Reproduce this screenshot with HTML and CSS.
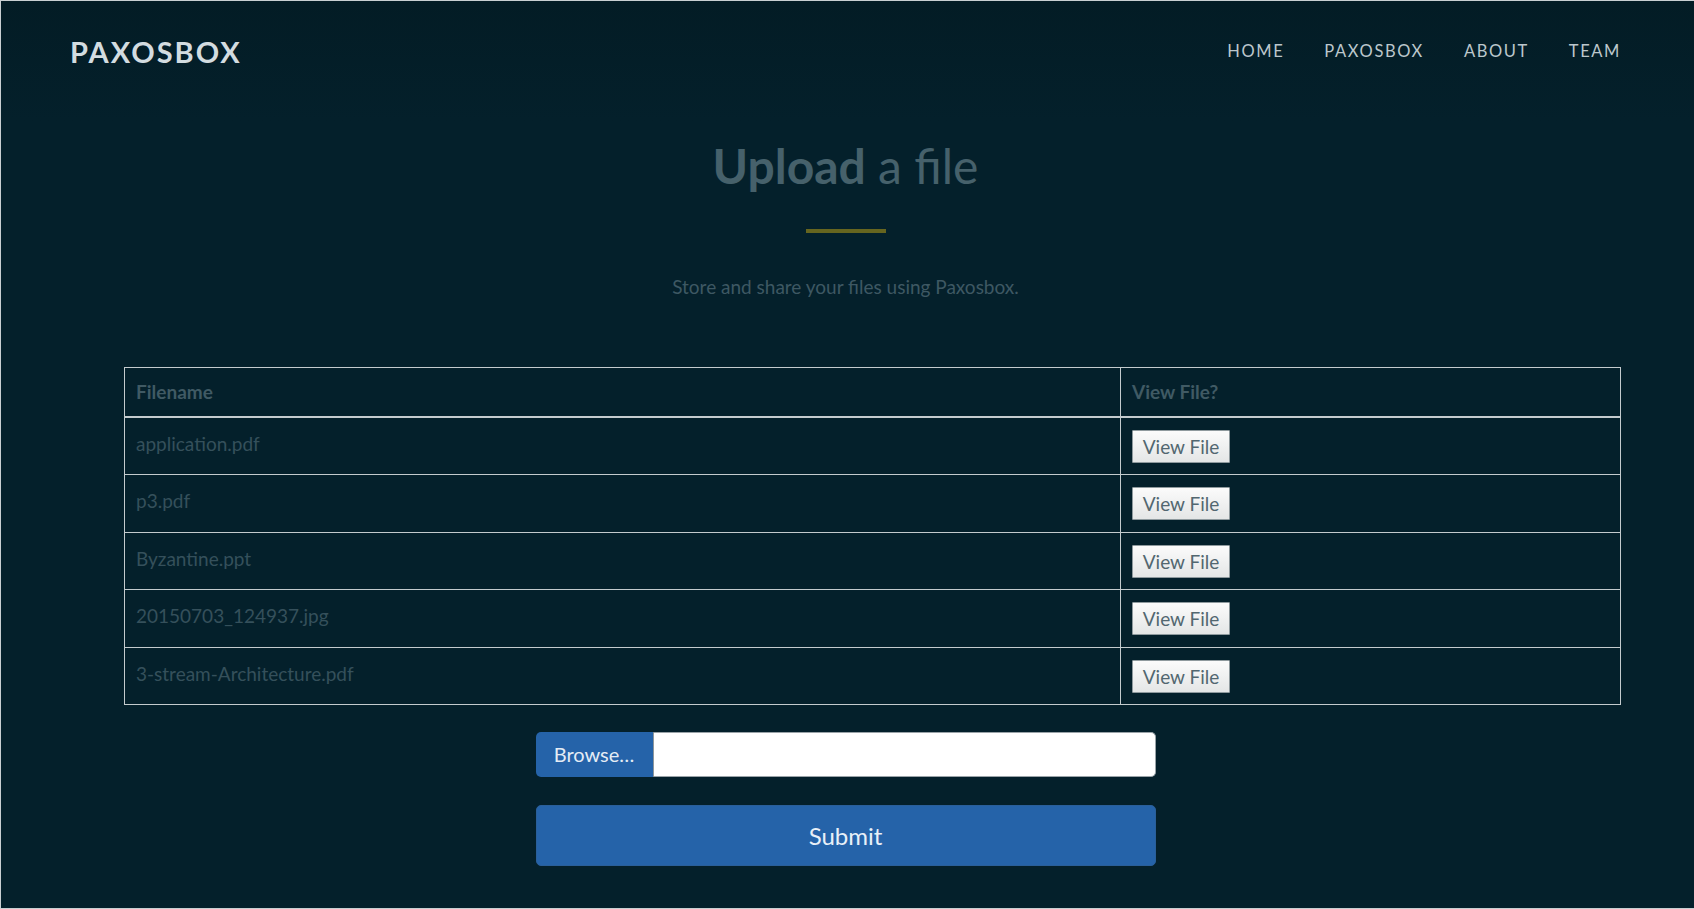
FILE: index.html
```html
<!DOCTYPE html>
<html lang="en">
<head>
<meta charset="utf-8">
<title>Paxosbox - Upload a file</title>
<link rel="stylesheet" href="styles.css">
</head>
<body>
<div class="page">
  <header class="topbar">
    <a class="brand" href="#">PAXOSBOX</a>
    <nav>
      <ul class="menu">
        <li><a href="#">HOME</a></li>
        <li><a href="#">PAXOSBOX</a></li>
        <li><a href="#">ABOUT</a></li>
        <li><a href="#">TEAM</a></li>
      </ul>
    </nav>
  </header>

  <section class="intro">
    <h1 class="title"><strong>Upload</strong> a file</h1>
    <hr class="rule">
    <p class="lead">Store and share your files using Paxosbox.</p>
  </section>

  <table class="files">
    <thead>
      <tr><th class="col-name">Filename</th><th>View File?</th></tr>
    </thead>
    <tbody>
      <tr><td>application.pdf</td><td><button class="view">View File</button></td></tr>
      <tr><td>p3.pdf</td><td><button class="view">View File</button></td></tr>
      <tr><td>Byzantine.ppt</td><td><button class="view">View File</button></td></tr>
      <tr><td>20150703_124937.jpg</td><td><button class="view">View File</button></td></tr>
      <tr><td>3-stream-Architecture.pdf</td><td><button class="view">View File</button></td></tr>
    </tbody>
  </table>

  <form class="upload">
    <div class="file-group">
      <span class="browse">Browse…</span>
      <span class="file-field"></span>
    </div>
    <button type="button" class="submit">Submit</button>
  </form>
</div>
</body>
</html>
```
FILE: styles.css
```css
html, body {
  margin: 0;
  padding: 0;
  background: #04202b;
}

body {
  font-family: Lato, "Open Sans", "Liberation Sans", sans-serif;
}

.page {
  box-sizing: border-box;
  height: 909px;
  background: linear-gradient(#031c25 0, #04202b 120px);
  border-top: 1px solid #c9cfd2;
  border-left: 1px solid #c9cfd2;
  border-bottom: 1px solid #c9cfd2;
  overflow: hidden;
}

/* ---------- top bar ---------- */
.topbar {
  display: flex;
  justify-content: space-between;
  align-items: flex-start;
  padding: 31px 73px 0 69px;
  height: 40px;
}

.brand {
  font-size: 29px;
  line-height: 40px;
  font-weight: 700;
  letter-spacing: 2px;
  color: #d3dce0;
  text-decoration: none;
}

.menu {
  display: flex;
  gap: 40px;
  list-style: none;
  margin: 0;
  padding: 0;
}

.menu a {
  display: block;
  font-size: 16.5px;
  line-height: 39px;
  letter-spacing: 1.6px;
  color: #bcc7cc;
  text-decoration: none;
}

/* ---------- intro ---------- */
.intro {
  display: flex;
  flex-direction: column;
  align-items: center;
  padding-right: 4px;
}

.title {
  margin: 65px 0 0;
  font-size: 48px;
  line-height: 58px;
  font-weight: 400;
  color: #46616b;
}

.title strong {
  font-weight: 700;
}

.rule {
  width: 80px;
  height: 4px;
  margin: 34px 0 0;
  border: 0;
  background: #66651f;
}

.lead {
  margin: 40px 0 0;
  font-size: 19px;
  line-height: 28px;
  color: #3e5863;
}

/* ---------- table ---------- */
.files {
  margin: 66px 0 0 123px;
  width: 1497px;
  border-collapse: collapse;
  border: 1px solid #c4cbce;
}

.files th,
.files td {
  border: 1px solid #c4cbce;
  text-align: left;
  vertical-align: top;
}

.files th {
  padding: 11px 11px 11px;
  font-size: 19px;
  line-height: 26px;
  font-weight: 700;
  color: #405a64;
  border-bottom-width: 2px;
}

.files th.col-name {
  width: 973px;
}

.files td {
  padding: 12px 11px 11.4px;
  font-size: 19px;
  line-height: 28px;
  color: #35505b;
}

.view {
  display: block;
  box-sizing: border-box;
  width: 98px;
  height: 33px;
  padding: 0;
  margin: 0;
  font-family: Lato, "Open Sans", "Liberation Sans", sans-serif;
  font-size: 19px;
  color: #526770;
  background: linear-gradient(#fbfbfb, #e4e6e6);
  border: 1px solid #8f9a9e;
  border-radius: 1px;
}

/* ---------- upload form ---------- */
.upload {
  display: flex;
  flex-direction: column;
  align-items: center;
  padding-right: 4px;
  margin-top: 27px;
  gap: 28px;
}

.file-group {
  display: flex;
  width: 620px;
  height: 45px;
}

.browse {
  display: flex;
  align-items: center;
  justify-content: center;
  width: 117px;
  background: #2563a9;
  color: #e4ecf5;
  font-size: 20px;
  border-radius: 5px 0 0 5px;
}

.file-field {
  flex: 1;
  background: #ffffff;
  border: 1px solid #9aa3a8;
  border-left: 1px solid #8d969b;
  border-radius: 0 5px 5px 0;
}

.submit {
  width: 620px;
  height: 61px;
  border: 1px solid #2a5f9a;
  border-radius: 5px;
  background: #2563a9;
  color: #e8f0f8;
  font-family: Lato, "Open Sans", "Liberation Sans", sans-serif;
  font-size: 24px;
}
```
